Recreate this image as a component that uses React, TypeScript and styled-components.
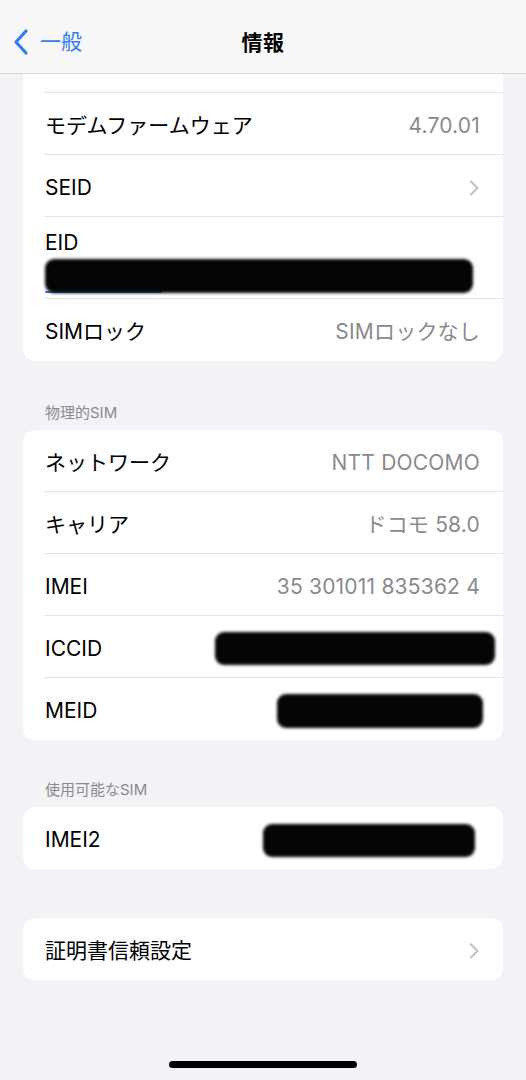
import React from 'react';
import styled, { createGlobalStyle } from 'styled-components';

const GlobalStyle = createGlobalStyle`
  html, body {
    margin: 0;
    padding: 0;
    background: #f2f2f7;
  }
  body {
    font-family: Inter, "Noto Sans CJK JP", sans-serif;
    -webkit-font-smoothing: antialiased;
  }
`;

const Screen = styled.div`
  position: relative;
  width: 526px;
  height: 1080px;
  overflow: hidden;
  background: #f2f2f7;
`;

const NavBar = styled.header`
  position: absolute;
  top: 0;
  left: 0;
  right: 0;
  height: 73px;
  background: #f7f7f7;
  border-bottom: 1px solid #d9d9dc;
  display: flex;
  align-items: center;
  justify-content: center;
  z-index: 2;
`;

const BackButton = styled.button`
  position: absolute;
  left: 12px;
  top: 28px;
  display: flex;
  align-items: center;
  gap: 10px;
  padding: 0;
  border: 0;
  background: none;
  color: #2f7cf6;
  font-family: Inter, "Noto Sans CJK JP", sans-serif;
  font-size: 21px;
  line-height: 28px;
`;

const Title = styled.h1`
  margin: 0;
  padding-top: 9px;
  font-size: 21px;
  font-weight: 700;
  color: #000;
  letter-spacing: 0.5px;
`;

const Content = styled.main`
  padding: 73px 23px 0;
  display: flex;
  flex-direction: column;
`;

const Section = styled.section<{ $gap: number }>`
  margin-top: ${(p) => p.$gap}px;
  display: flex;
  flex-direction: column;
`;

const SectionHeader = styled.h2`
  margin: 0 0 7px;
  padding-left: 22px;
  font-size: 15px;
  line-height: 20px;
  font-weight: 400;
  color: #8a8a8e;
`;

const Card = styled.div<{ $flatTop?: boolean }>`
  background: #fff;
  border-radius: ${(p) => (p.$flatTop ? '0 0 12px 12px' : '12px')};
  padding-left: 22px;
  display: flex;
  flex-direction: column;
`;

const Row = styled.div<{ $h?: number }>`
  height: ${(p) => p.$h || 62}px;
  box-sizing: border-box;
  padding-right: 23px;
  padding-top: 4px;
  display: flex;
  align-items: center;
  justify-content: space-between;
  border-bottom: 1px solid #e3e3e6;
  &:last-child {
    border-bottom: 0;
  }
`;

const StackRow = styled(Row)`
  flex-direction: column;
  align-items: stretch;
  justify-content: flex-start;
  padding-top: 12px;
`;

const Label = styled.span`
  font-size: 21px;
  line-height: 28px;
  color: #000;
`;

const Value = styled.span`
  font-size: 21px;
  line-height: 28px;
  color: #8a8a8e;
  letter-spacing: 0.2px;
`;

const Redact = styled.div<{ $w: number; $h: number; $shift?: number }>`
  width: ${(p) => p.$w}px;
  height: ${(p) => p.$h}px;
  margin-right: ${(p) => -(p.$shift || 0)}px;
  background: #050505;
  border-radius: 9px;
  filter: blur(1.4px);
`;

const LinkLine = styled.div`
  width: 117px;
  height: 2px;
  margin-top: -2px;
  background: #2f7cf6;
  border-radius: 1px;
`;

const HomeIndicator = styled.div`
  position: absolute;
  left: 169px;
  bottom: 12px;
  width: 188px;
  height: 7px;
  border-radius: 4px;
  background: #000;
`;

const BackChevron = () => (
  <svg width="18" height="28" viewBox="0 0 18 28" fill="none">
    <path d="M14 3 L4 14 L14 25" stroke="#2f7cf6" strokeWidth="3.2" strokeLinecap="round" strokeLinejoin="round" />
  </svg>
);

const Chevron = () => (
  <svg width="11" height="16" viewBox="0 0 11 16" fill="none">
    <path d="M2 1.5 L8.5 8 L2 14.5" stroke="#c4c4c7" strokeWidth="2.2" strokeLinecap="round" strokeLinejoin="round" />
  </svg>
);

export default function App() {
  return (
    <Screen>
      <GlobalStyle />
      <NavBar>
        <BackButton>
          <BackChevron />
          一般
        </BackButton>
        <Title>情報</Title>
      </NavBar>

      <Content>
        <Card $flatTop>
          {/* row scrolled mostly under the nav bar */}
          <Row $h={20} />
          <Row>
            <Label>モデムファームウェア</Label>
            <Value>4.70.01</Value>
          </Row>
          <Row>
            <Label>SEID</Label>
            <Chevron />
          </Row>
          <StackRow $h={82}>
            <Label>EID</Label>
            <Redact $w={428} $h={34} style={{ marginTop: 2 }} />
            <LinkLine />
          </StackRow>
          <Row>
            <Label>SIMロック</Label>
            <Value>SIMロックなし</Value>
          </Row>
        </Card>

        <Section $gap={42}>
          <SectionHeader>物理的SIM</SectionHeader>
          <Card>
            <Row>
              <Label>ネットワーク</Label>
              <Value>NTT DOCOMO</Value>
            </Row>
            <Row>
              <Label>キャリア</Label>
              <Value>ドコモ 58.0</Value>
            </Row>
            <Row>
              <Label>IMEI</Label>
              <Value>35 301011 835362 4</Value>
            </Row>
            <Row>
              <Label>ICCID</Label>
              <Redact $w={280} $h={33} $shift={15} />
            </Row>
            <Row>
              <Label>MEID</Label>
              <Redact $w={206} $h={34} $shift={3} />
            </Row>
          </Card>
        </Section>

        <Section $gap={40}>
          <SectionHeader>使用可能なSIM</SectionHeader>
          <Card>
            <Row>
              <Label>IMEI2</Label>
              <Redact $w={212} $h={33} $shift={-5} />
            </Row>
          </Card>
        </Section>

        <Section $gap={49}>
          <Card>
            <Row>
              <Label>証明書信頼設定</Label>
              <Chevron />
            </Row>
          </Card>
        </Section>
      </Content>

      <HomeIndicator />
    </Screen>
  );
}
